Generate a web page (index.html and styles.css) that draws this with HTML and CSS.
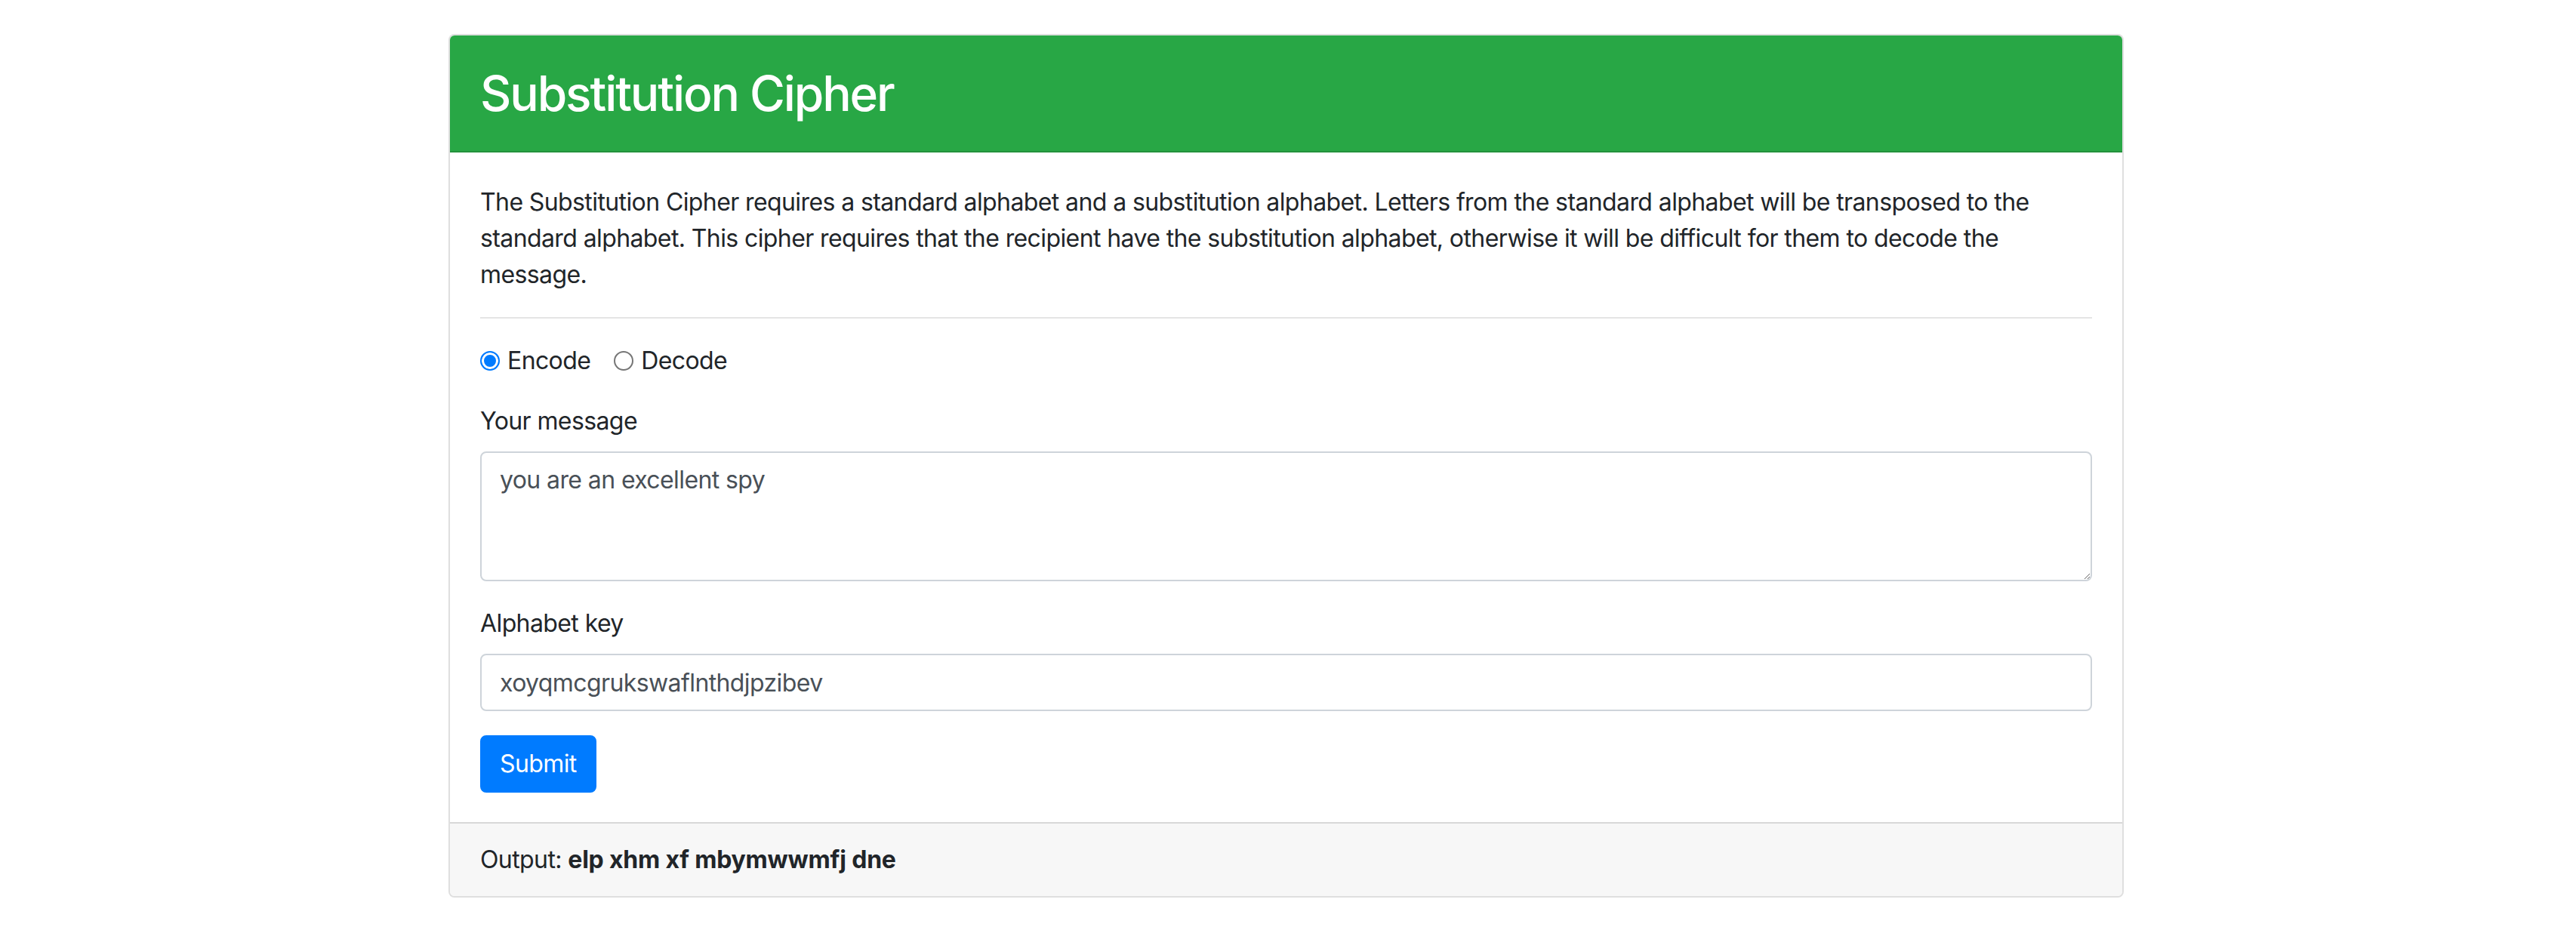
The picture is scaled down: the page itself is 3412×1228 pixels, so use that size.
FILE: index.html
```html
<!DOCTYPE html>
<html lang="en">
<head>
<meta charset="utf-8">
<title>Substitution Cipher</title>
<link rel="stylesheet" href="styles.css">
</head>
<body>
<div class="container">
  <div class="card">
    <div class="card-header">
      <h2 class="title">Substitution Cipher</h2>
    </div>
    <div class="card-body">
      <p class="intro">The Substitution Cipher requires a standard alphabet and a substitution alphabet. Letters from the standard alphabet will be transposed to the standard alphabet. This cipher requires that the recipient have the substitution alphabet, otherwise it will be difficult for them to decode the message.</p>
      <hr class="divider">
      <form class="cipher-form">
        <div class="form-group radios">
          <label class="radio-option"><input class="radio" type="radio" name="mode" checked><span>Encode</span></label>
          <label class="radio-option"><input class="radio" type="radio" name="mode"><span>Decode</span></label>
        </div>
        <div class="form-group">
          <label class="field-label" for="msg">Your message</label>
          <textarea id="msg" class="form-control textarea" rows="3">you are an excellent spy</textarea>
        </div>
        <div class="form-group">
          <label class="field-label" for="key">Alphabet key</label>
          <input id="key" class="form-control input" type="text" value="xoyqmcgrukswaflnthdjpzibev">
        </div>
        <button class="btn" type="button">Submit</button>
      </form>
    </div>
    <div class="card-footer">Output: <strong>elp xhm xf mbymwwmfj dne</strong></div>
  </div>
</div>
</body>
</html>
```
FILE: styles.css
```css
* { box-sizing: border-box; }
html, body { margin: 0; padding: 0; background: #fff; }
body {
  font-family: Inter, "Liberation Sans", sans-serif;
  font-size: 32px;
  line-height: 48px;
  letter-spacing: -0.6px;
  color: #212529;
}
.container {
  width: 2219px;
  margin: 45px 0 0 594px;
}
.card {
  border: 2px solid rgba(0,0,0,.125);
  border-radius: 8px;
  overflow: hidden;
  background: #fff;
}
.card-header {
  background: #28a745;
  color: #fff;
  padding: 38px 40px;
  border-bottom: 2px solid rgba(0,0,0,.125);
}
.title {
  margin: 0;
  font-size: 64px;
  line-height: 77px;
  font-weight: 500;
  letter-spacing: -2.1px;
}
.card-body { padding: 42px 40px 39px; }
.intro { margin: 0 0 32px; }
.divider {
  margin: 0 0 32px;
  border: 0;
  border-top: 2px solid rgba(0,0,0,.1);
}
.cipher-form { margin: 0; }
.form-group { margin-bottom: 32px; }
.radios { display: flex; gap: 31px; }
.radio-option { display: inline-flex; align-items: center; gap: 10px; }
.radio {
  appearance: none;
  -webkit-appearance: none;
  margin: 0;
  width: 26px;
  height: 26px;
  border-radius: 50%;
  border: 2px solid #767676;
  background: #fff;
}
.radio:checked {
  border-color: #007bff;
  background: #007bff;
  box-shadow: inset 0 0 0 3px #fff;
}
.field-label { display: block; margin-bottom: 16px; }
.form-control {
  display: block;
  width: 100%;
  font-family: inherit;
  font-size: 32px;
  line-height: 48px;
  letter-spacing: -0.6px;
  color: #495057;
  padding: 12px 24px;
  border: 2px solid #ced4da;
  border-radius: 8px;
  background: #fff;
  margin: 0;
}
.textarea { height: 172px; resize: vertical; }
.input { height: 76px; }
.btn {
  font-family: inherit;
  font-size: 32px;
  line-height: 48px;
  letter-spacing: -0.6px;
  color: #fff;
  background: #007bff;
  border: 2px solid #007bff;
  border-radius: 8px;
  padding: 12px 24px;
  margin: 0;
}
.card-footer {
  background: #f7f7f7;
  border-top: 2px solid rgba(0,0,0,.125);
  padding: 24px 40px;
}
.card-footer strong { font-weight: 700; letter-spacing: -0.2px; }
```
